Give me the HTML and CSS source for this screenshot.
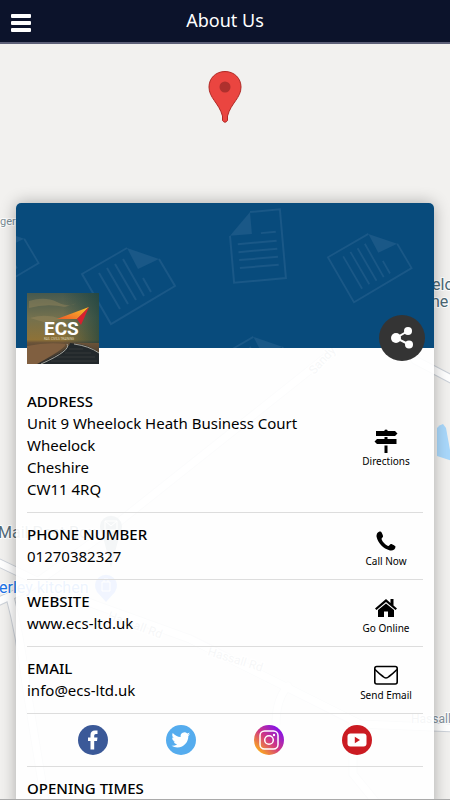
FILE: index.html
```html
<!DOCTYPE html>
<html lang="en">
<head>
    <meta charset="utf-8">
    <meta name="viewport" content="width=device-width, initial-scale=1">
    <title>About Us</title>
    <link rel="stylesheet" href="styles.css">
</head>

<body>
    <header class="topbar">
        <button type="button" class="menu-btn" aria-label="Menu">
            <span></span>
            <span></span>
            <span></span>
        </button>
        <h1>About Us</h1>
    </header>

    <main>
        <!-- map behind the card -->
        <svg class="map" viewBox="0 0 450 757" preserveAspectRatio="xMidYMin slice" aria-hidden="true">
            <rect width="450" height="757" fill="#f2f1ef"/>
            <g fill="none" stroke-linecap="round">
                <g stroke="#cdd2d9" stroke-width="9">
                    <path d="M-5 517L60 548"/>
                    <path d="M-5 559L30 543Q70 515 110 485L330 310"/>
                    <path d="M415 316L455 337"/>
                    <path d="M10 553Q20 590 26 640L45 757"/>
                    <path d="M60 548L190 595Q290 645 360 680L455 684"/>
                    <path d="M288 642Q276 655 276 680M353 680V730L375 757"/>
                </g>
                <g stroke="#fff" stroke-width="7">
                    <path d="M-5 517L60 548"/>
                    <path d="M-5 559L30 543Q70 515 110 485L330 310"/>
                    <path d="M415 316L455 337"/>
                    <path d="M10 553Q20 590 26 640L45 757"/>
                    <path d="M60 548L190 595Q290 645 360 680L455 684"/>
                    <path d="M288 642Q276 655 276 680M353 680V730L375 757"/>
                </g>
            </g>
            <path d="M437 384Q439 381 443 380L446 384L452 417L437 412Z" fill="#a9d8fb"/>
            <g class="labels">
                <text x="0" y="181" font-size="11" fill="#7a8c94">ger</text>
                <text x="432" y="246" font-size="16" fill="#4b6875">elo</text>
                <text x="431" y="263" font-size="16" fill="#4b6875">ne</text>
                <text x="-2" y="494" font-size="16" fill="#546c79">Mail Post Box</text>
                <text x="-1" y="549" font-size="16" fill="#1a73e8">erley kitchen</text>
                <text x="411" y="679" font-size="12" fill="#84919b">Hassall</text>
                <text transform="translate(107 575) rotate(20)" font-size="12" fill="#84919b">Hassall Rd</text>
                <text transform="translate(207 611) rotate(17)" font-size="12" fill="#84919b">Hassall Rd</text>
                <text transform="translate(314 331) rotate(-47)" font-size="12" fill="#84919b">Sandy</text>
            </g>
            <path d="M111 524L102 489A11 11 0 1 1 120 489Z" fill="#78909c"/>
            <path d="M106 558L97 548A11 11 0 1 1 115 548Z" fill="#4a86f7"/>
            <path d="M105 477H117V486H105ZL111 482L117 477M102 538H110V547H102ZM104 538V535H108V538" fill="none" stroke="#fff" stroke-width="1"/>
        </svg>

        <svg class="pin" viewBox="0 0 34 52" aria-hidden="true">
            <path d="M17 .5C7.500 .5 1 7.500 1 16C1 27 11 32 14.500 45V49.500Q17 53 19.500 49.500V45C23 32 33 27 33 16C33 7.500 26.500 .5 17 .5Z" fill="#ea4540" stroke="#b02824"/>
            <circle cx="17" cy="16" r="5.500" fill="#ae302d"/>
        </svg>

        <section class="card">
            <div class="banner">
                <svg class="banner-art" viewBox="0 0 418 145" preserveAspectRatio="xMidYMid slice" aria-hidden="true">
                    <defs>
                        <g id="sheet">
                            <path d="M1 23V70H53V1H23" fill="none" stroke="#1a5887" stroke-width="2"/>
                            <path d="M1 23L23 1V23Z" fill="#1a5887"/>
                            <path d="M32 23H47M8 32H47M8 40H47M8 48H47M8 56H47" fill="none" stroke="#1a5887" stroke-width="2"/>
                        </g>
                        <g id="sheet-turned">
                            <path d="M46 1L1 27L30 77L94 39L78 12" fill="none" stroke="#1a5887" stroke-width="2"/>
                            <path d="M46 1L78 12L57 22Z" fill="#1a5887"/>
                            <path d="M18 26L39 62M26 21L47 57M34 17L55 53M42 12L63 49M62 31L70 45" fill="none" stroke="#1a5887" stroke-width="2"/>
                        </g>
                    </defs>
                    <use href="#sheet" transform="translate(211 10) rotate(-5)"/>
                    <use href="#sheet-turned" x="65" y="44"/>
                    <use href="#sheet-turned" transform="translate(311 30) scale(.9)"/>
                    <use href="#sheet-turned" transform="translate(-62 25) scale(.9)"/>
                    <use href="#sheet-turned" transform="translate(196 133) scale(.9)"/>
                </svg>
                <svg class="logo" viewBox="0 0 72 71" role="img" aria-label="ECS Rail Civils Training">
                    <defs>
                        <linearGradient id="sky" x1="0" y1="0" x2="0" y2="1">
                            <stop offset="0" stop-color="#46594e"/>
                            <stop offset=".35" stop-color="#74714e"/>
                            <stop offset=".66" stop-color="#8e7237"/>
                            <stop offset=".7" stop-color="#6b5338"/>
                            <stop offset="1" stop-color="#302e2c"/>
                        </linearGradient>
                        <linearGradient id="shade" x1="0" y1="0" x2="1" y2="0">
                            <stop offset=".5" stop-color="#17413f" stop-opacity="0"/>
                            <stop offset="1" stop-color="#17413f" stop-opacity=".7"/>
                        </linearGradient>
                        <linearGradient id="wing" x1="0" y1="1" x2="1" y2="0">
                            <stop offset="0" stop-color="#ef5a28"/>
                            <stop offset="1" stop-color="#fbc72a"/>
                        </linearGradient>
                    </defs>
                    <rect width="72" height="71" fill="url(#sky)"/>
                    <path d="M2 8Q18 3 30 9T50 10L38 14Q20 10 2 15ZM3 25Q20 20 34 26L20 30Z" fill="#a08c60" opacity=".4"/>
                    <rect width="72" height="50" fill="url(#shade)"/>
                    <path d="M0 53Q20 49 38 51Q41 54 10 71H0Z" fill="#805f40"/>
                    <path d="M43 50Q62 51 72 60V71H12Q42 57 43 50Z" fill="#22282b"/>
                    <path d="M40 51Q45 57 14 71M47 51Q62 53 72 60" fill="none" stroke="#a5a49c" stroke-width="1"/>
                    <path d="M42 56H56M38 60H64M30 64H68M24 68H70" stroke="#34383b" stroke-width="1"/>
                    <path d="M30 26L62 14L50 26Z" fill="url(#wing)"/>
                    <path d="M62 14L54 32L50 26Z" fill="#d7202f"/>
                    <text x="17" y="42" class="logo-name">ECS</text>
                    <text x="17" y="47" class="logo-tag">RAIL CIVILS TRAINING</text>
                </svg>
                <button type="button" class="share-btn" aria-label="Share">
                    <svg viewBox="0 0 24 24">
                        <path d="M18 5L6 12L19 18.500" fill="none" stroke="#fff" stroke-width="2"/>
                        <circle cx="6" cy="12" r="5" fill="#fff"/>
                        <circle cx="18" cy="5" r="4" fill="#fff"/>
                        <circle cx="19" cy="18.500" r="4" fill="#fff"/>
                    </svg>
                </button>
            </div>

            <div class="details">
                <div class="row">
                    <div>
                        <h2>ADDRESS</h2>
                        <p>Unit 9 Wheelock Heath Business Court<br>Wheelock<br>Cheshire<br>CW11 4RQ</p>
                    </div>
                    <a href="#directions" class="action">
                        <svg viewBox="0 0 24 24">
                            <path d="M10.500 1Q12 0 13.500 1V2H21L23.500 4.500L21 7H2V2H10.500ZM10.500 8H13.500V10H22.500V15H3L.5 12.500L3 10H10.500ZM10.500 16.500H13.500V24H10.500Z"/>
                        </svg>
                        Directions
                    </a>
                </div>
                <div class="row">
                    <div>
                        <h2>PHONE NUMBER</h2>
                        <p>01270382327</p>
                    </div>
                    <a href="tel:01270382327" class="action">
                        <svg viewBox="0 0 24 24">
                            <path d="M6.500 2.500C3.500 2.500 2.500 5 2.500 7.500C4 14 9 19.500 16 21.500C19 22 21.500 20.500 21.500 17.500C21.500 17 18 15 17 15C16 15 15 17.500 14 17C11 15.500 8.500 13 7.500 10C7.500 9 9.500 8 9 7C9 6 7.500 2.500 6.500 2.500Z"/>
                        </svg>
                        Call Now
                    </a>
                </div>
                <div class="row">
                    <div>
                        <h2>WEBSITE</h2>
                        <p>www.ecs-ltd.uk</p>
                    </div>
                    <a href="#website" class="action">
                        <svg viewBox="0 0 24 24">
                            <path d="M12 3L1 12.500L2.500 14L12 6L21.500 14L23 12.500L19.500 9.500V3H16.500V7Z"/>
                            <path d="M4 14L12 7.500L20 14V21H14V15.500H10V21H4Z"/>
                        </svg>
                        Go Online
                    </a>
                </div>
                <div class="row">
                    <div>
                        <h2>EMAIL</h2>
                        <p>info@ecs-ltd.uk</p>
                    </div>
                    <a href="mailto:info@ecs-ltd.uk" class="action">
                        <svg viewBox="0 0 24 24">
                            <rect x=".8" y="3.500" width="22.400" height="17.500" rx="2" fill="none" stroke="#000" stroke-width="1.600"/>
                            <path d="M1 6.500Q5 10.500 9 13.500Q12 16.500 15 13.500Q19 10.500 23 6.500" fill="none" stroke="#000" stroke-width="1.600"/>
                        </svg>
                        Send Email
                    </a>
                </div>
                <div class="social">
                    <a href="#facebook" aria-label="Facebook">
                        <svg viewBox="0 0 30 30">
                            <circle cx="15" cy="15" r="15" fill="#3b5998"/>
                            <path d="M12.500 24.500V16H10V12.500H12.500V10Q12.500 5.500 17 5.500H19.500V9H17.800Q16.200 9 16.200 10.500V12.500H19.500L19 16H16.200V24.500Z" fill="#fff"/>
                        </svg>
                    </a>
                    <a href="#twitter" aria-label="Twitter">
                        <svg viewBox="0 0 30 30">
                            <circle cx="15" cy="15" r="15" fill="#55acee"/>
                            <path transform="translate(5.500 5.500) scale(.78)" fill="#fff" d="M23.950 4.570a10 10 0 0 1-2.820.77 4.960 4.960 0 0 0 2.160-2.720c-.95.550-2 .95-3.130 1.180a4.920 4.920 0 0 0-8.380 4.480C7.690 8.100 4.070 6.130 1.640 3.160a4.820 4.820 0 0 0-.67 2.480c0 1.710.87 3.210 2.190 4.100a4.900 4.900 0 0 1-2.230-.62v.06a4.920 4.920 0 0 0 3.950 4.830 5 5 0 0 1-2.210.08 4.940 4.940 0 0 0 4.600 3.420A9.870 9.870 0 0 1 0 19.540a14 14 0 0 0 7.550 2.210c9.050 0 14-7.500 14-13.980 0-.21 0-.42-.02-.63a9.940 9.940 0 0 0 2.420-2.570z"/>
                        </svg>
                    </a>
                    <a href="#instagram" aria-label="Instagram">
                        <svg viewBox="0 0 30 30">
                            <defs>
                                <linearGradient id="insta" x1=".1" y1=".9" x2=".85" y2=".1">
                                    <stop offset="0" stop-color="#ffb515"/>
                                    <stop offset=".5" stop-color="#d13980"/>
                                    <stop offset="1" stop-color="#8110ee"/>
                                </linearGradient>
                            </defs>
                            <circle cx="15" cy="15" r="15" fill="url(#insta)"/>
                            <rect x="6" y="6" width="18" height="18" rx="4.500" fill="none" stroke="#fff" stroke-width="1.500"/>
                            <circle cx="15" cy="15" r="4.300" fill="none" stroke="#fff" stroke-width="1.500"/>
                            <circle cx="20" cy="10" r="1.200" fill="#fff"/>
                        </svg>
                    </a>
                    <a href="#youtube" aria-label="YouTube">
                        <svg viewBox="0 0 30 30">
                            <circle cx="15" cy="15" r="15" fill="#cb1b22"/>
                            <rect x="5.500" y="8.500" width="19" height="13" rx="3" fill="#fff"/>
                            <path d="M12.800 11.800L18 15L12.800 18.200Z" fill="#cb1b22"/>
                        </svg>
                    </a>
                </div>
                <div class="row">
                    <div>
                        <h2>OPENING TIMES</h2>
                    </div>
                </div>
            </div>
        </section>
    </main>
</body>
</html>
```
FILE: styles.css
```css
* {
    box-sizing: border-box;
}

body {
    display: flex;
    flex-direction: column;
    height: 100vh;
    margin: 0;
    border-bottom: 1px solid #aaa;
    font-family: "Noto Sans", "Open Sans", sans-serif;
    font-size: 15px;
    line-height: 22px;
    color: #000;
}

h1, h2, p {
    margin: 0;
}

button {
    padding: 0;
    border: none;
    cursor: pointer;
}

svg {
    display: block;
}

/* Header */
.topbar {
    display: grid;
    grid-template-columns: 20px 1fr 20px;
    align-items: center;
    flex-shrink: 0;
    height: 44px;
    padding: 0 11px;
    background: #0c132b;
    border-bottom: 2px solid #5d6078;
}

.topbar h1 {
    padding-bottom: 2px;
    font-size: 18px;
    font-weight: 400;
    text-align: center;
    color: #fff;
}

.menu-btn {
    display: flex;
    flex-direction: column;
    gap: 3px;
    padding-top: 3px;
    background: none;
}

.menu-btn span {
    width: 20px;
    height: 4px;
    border-radius: 1px;
    background: #fff;
}

/* Map */
main {
    position: relative;
    flex: 1;
    min-height: 0;
    overflow-y: auto;
    scrollbar-width: none;
    background: #f2f1ef;
}

.map {
    position: absolute;
    top: 0;
    left: 0;
    width: 100%;
    height: 100%;
}

.labels {
    font-family: Roboto, sans-serif;
    stroke: #fff;
    stroke-width: 2px;
    paint-order: stroke;
}

.pin {
    position: relative;
    width: 34px;
    height: 52px;
    margin: 27px auto 80px;
}

/* Card */
.card {
    position: relative;
    margin: 0 16px;
    border-radius: 5px;
    background: rgba(255, 255, 255, .92);
    box-shadow: 0 0 16px rgba(0, 0, 0, .3);
}

.banner {
    position: relative;
    height: 145px;
    border-radius: 5px 5px 0 0;
    background: #084b7c;
}

.banner-art {
    width: 100%;
    height: 100%;
}

.logo {
    position: absolute;
    left: 11px;
    bottom: -16px;
    width: 72px;
    height: 71px;
}

.logo-name {
    font: 700 19px Roboto, sans-serif;
    fill: #fff;
}

.logo-tag {
    font: 3px Roboto, sans-serif;
    fill: #d8cfb4;
}

.share-btn {
    position: absolute;
    right: 9px;
    bottom: -13px;
    display: grid;
    place-items: center;
    width: 46px;
    height: 46px;
    border-radius: 50%;
    background: #343434;
}

.share-btn svg {
    width: 24px;
    height: 24px;
}

.details {
    padding: 32px 11px 0;
}

.row {
    display: flex;
    justify-content: space-between;
    align-items: center;
    padding: 10px 0 12px;
    border-bottom: 1px solid #ddd;
}

.row h2 {
    font-size: 15px;
    font-weight: 500;
}

.action {
    display: flex;
    flex-direction: column;
    align-items: center;
    gap: 2px;
    width: 74px;
    padding-top: 6px;
    font-size: 10px;
    line-height: 12px;
    color: #000;
    text-decoration: none;
}

.action svg {
    width: 24px;
    height: 24px;
}

.social {
    display: flex;
    justify-content: space-around;
    padding: 11px 22px;
    border-bottom: 1px solid #ddd;
}

.social svg {
    width: 30px;
    height: 30px;
}
```
